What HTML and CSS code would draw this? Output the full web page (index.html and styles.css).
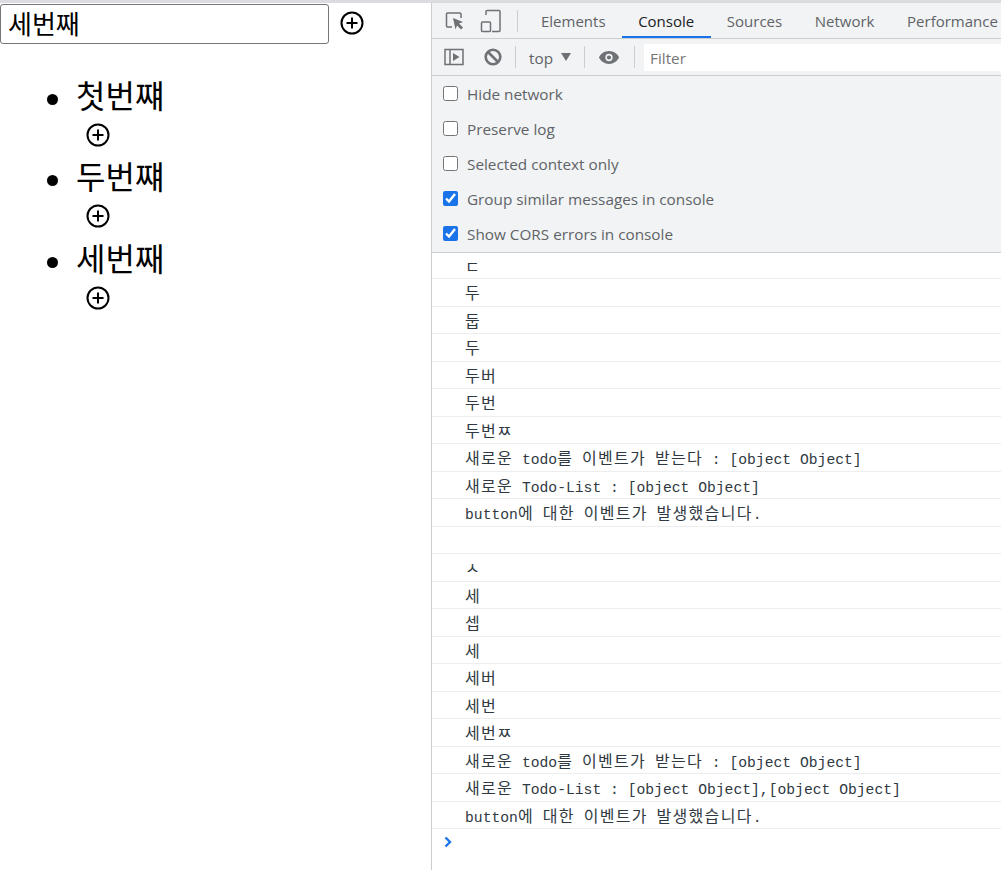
FILE: index.html
```html
<!DOCTYPE html>
<html lang="ko">
<head>
  <meta charset="UTF-8" />
  <title>Todo List</title>
  <link rel="stylesheet" href="styles.css">
</head>
<body>
  <div class="app">
    <div class="todo-form">
      <input class="todo-input" type="text" value="세번째" />
      <svg class="add-icon" viewBox="0 0 24 24"><circle cx="12" cy="12" r="10.500"/><path d="M12 6.500v11M6.500 12h11"/></svg>
    </div>
    <ul class="todo-list">
      <li>
        <div class="todo-text">첫번쨰</div>
        <svg class="add-icon" viewBox="0 0 24 24"><circle cx="12" cy="12" r="10.500"/><path d="M12 6.500v11M6.500 12h11"/></svg>
      </li>
      <li>
        <div class="todo-text">두번쨰</div>
        <svg class="add-icon" viewBox="0 0 24 24"><circle cx="12" cy="12" r="10.500"/><path d="M12 6.500v11M6.500 12h11"/></svg>
      </li>
      <li>
        <div class="todo-text">세번째</div>
        <svg class="add-icon" viewBox="0 0 24 24"><circle cx="12" cy="12" r="10.500"/><path d="M12 6.500v11M6.500 12h11"/></svg>
      </li>
    </ul>
  </div>

  <div class="devtools">
    <div class="tabbar">
      <svg class="tool-icon inspect" viewBox="0 0 22 22"><path class="thin" d="M8 17H3.500a1 1 0 0 1-1-1V4a1 1 0 0 1 1-1h12.500a1 1 0 0 1 1 1v4"/><path class="solid" d="M9 8l10 4-4 1.500 4 4-2 2-4-4-1.500 4z"/></svg>
      <svg class="tool-icon device" viewBox="0 0 22 24"><path class="thin" d="M6 6V2.500a1 1 0 0 1 1-1h12a1 1 0 0 1 1 1v19a1 1 0 0 1-1 1h-7"/><rect class="thin" x="1.500" y="13" width="9" height="9.500" rx="1"/></svg>
      <span class="divider"></span>
      <a class="tab">Elements</a>
      <a class="tab active">Console</a>
      <a class="tab">Sources</a>
      <a class="tab">Network</a>
      <a class="tab">Performance</a>
    </div>
    <div class="filterbar">
      <svg class="tool-icon sidebar" viewBox="0 0 20 18"><rect class="thin" x="1" y="1.500" width="18" height="15"/><path class="thin" d="M6 1.500v15"/><path class="solid" d="M9 5l6.500 4L9 13z"/></svg>
      <svg class="tool-icon clear" viewBox="0 0 18 18"><circle cx="9" cy="9" r="7.300"/><path d="M4 4l10 10"/></svg>
      <span class="divider"></span>
      <span class="context">top</span>
      <span class="caret"></span>
      <span class="divider"></span>
      <svg class="tool-icon eye" viewBox="0 0 24 16"><path class="solid" d="M12 1C7 1 3 4 1 8c2 4 6 7 11 7s9-3 11-7c-2-4-6-7-11-7z"/><circle class="pupil" cx="12" cy="8" r="4"/><circle class="solid" cx="12" cy="8" r="2.300"/></svg>
      <span class="divider"></span>
      <div class="filter-box">Filter</div>
    </div>
    <div class="settings">
      <label class="setting"><input type="checkbox" />Hide network</label>
      <label class="setting"><input type="checkbox" />Preserve log</label>
      <label class="setting"><input type="checkbox" />Selected context only</label>
      <label class="setting"><input type="checkbox" checked />Group similar messages in console</label>
      <label class="setting"><input type="checkbox" checked />Show CORS errors in console</label>
    </div>
    <div class="messages">
      <div class="msg"><span class="ko">ㄷ</span></div>
      <div class="msg"><span class="ko">두</span></div>
      <div class="msg"><span class="ko">둡</span></div>
      <div class="msg"><span class="ko">두</span></div>
      <div class="msg"><span class="ko">두버</span></div>
      <div class="msg"><span class="ko">두번</span></div>
      <div class="msg"><span class="ko">두번ㅉ</span></div>
      <div class="msg"><span class="ko">새로운</span> todo<span class="ko">를</span> <span class="ko">이벤트가</span> <span class="ko">받는다</span> : [object Object]</div>
      <div class="msg"><span class="ko">새로운</span> Todo-List : [object Object]</div>
      <div class="msg">button<span class="ko">에</span> <span class="ko">대한</span> <span class="ko">이벤트가</span> <span class="ko">발생했습니다</span>.</div>
      <div class="msg"></div>
      <div class="msg"><span class="ko">ㅅ</span></div>
      <div class="msg"><span class="ko">세</span></div>
      <div class="msg"><span class="ko">셉</span></div>
      <div class="msg"><span class="ko">세</span></div>
      <div class="msg"><span class="ko">세버</span></div>
      <div class="msg"><span class="ko">세번</span></div>
      <div class="msg"><span class="ko">세번ㅉ</span></div>
      <div class="msg"><span class="ko">새로운</span> todo<span class="ko">를</span> <span class="ko">이벤트가</span> <span class="ko">받는다</span> : [object Object]</div>
      <div class="msg"><span class="ko">새로운</span> Todo-List : [object Object],[object Object]</div>
      <div class="msg">button<span class="ko">에</span> <span class="ko">대한</span> <span class="ko">이벤트가</span> <span class="ko">발생했습니다</span>.</div>
      <div class="prompt">
        <svg class="prompt-icon" viewBox="0 0 8 12"><path d="M1.500 1.500L6 6l-4.500 4.500"/></svg>
      </div>
    </div>
  </div>
</body>
</html>
```

FILE: styles.css
```css
* {
  box-sizing: border-box;
}

html, body {
  height: 100%;
}

body {
  margin: 0;
  overflow: hidden;
  display: flex;
  background-color: #fff;
  border-top: 3px solid #dadce0;
  font-family: "Noto Sans CJK KR", sans-serif;
  color: #000;
}

/* left: the todo app */
.app {
  width: 431px;
  flex-shrink: 0;
}

.todo-form {
  display: flex;
  align-items: center;
  padding-top: 1px;
}

.todo-input {
  width: 329px;
  height: 40px;
  padding: 0 7px 3px;
  border: 1px solid #767676;
  border-radius: 3px;
  outline: none;
  font-family: "Noto Sans CJK KR", sans-serif;
  font-size: 26px;
  color: #000;
}

.add-icon {
  width: 24px;
  height: 24px;
  fill: none;
  stroke: #000;
  stroke-width: 2;
}

.todo-form .add-icon {
  margin: -2px 0 0 11px;
}

.todo-list {
  margin: 27px 0 0;
  padding: 0 0 0 76px;
  list-style: none;
  font-size: 32px;
}

.todo-list li {
  height: 81.300px;
}

.todo-text {
  height: 46px;
  line-height: 46px;
}

.todo-text::before {
  content: "";
  display: inline-block;
  width: 11px;
  height: 11px;
  margin: 0 18px 0 -29px;
  border-radius: 50%;
  background-color: #000;
  vertical-align: 3px;
}

.todo-list .add-icon {
  display: block;
  margin: 6px 0 0 10px;
}

/* right: devtools */
.devtools {
  flex: 1;
  min-width: 0;
  border-left: 1px solid #cbcdd1;
  font-family: "Open Sans", sans-serif;
  color: #5f6368;
  font-size: 15.300px;
}

.tabbar {
  height: 36px;
  display: flex;
  align-items: center;
  padding-left: 12px;
  background-color: #f1f3f4;
  border-bottom: 1px solid #cbcdd1;
  white-space: nowrap;
  overflow: hidden;
}

.tool-icon {
  flex-shrink: 0;
}

.thin {
  fill: none;
  stroke: #6e7175;
  stroke-width: 1.500;
}

.solid {
  fill: #6e7175;
}

.inspect {
  width: 22px;
  height: 22px;
}

.device {
  width: 22px;
  height: 24px;
  margin-left: 14px;
}

.divider {
  width: 1px;
  height: 22px;
  background-color: #cbcdd1;
  flex-shrink: 0;
}

.tabbar .divider {
  margin: 0 6.700px 0 15px;
}

.tab {
  height: 35px;
  line-height: 37px;
  padding: 0 16.300px;
  font-size: 15px;
}

.tab.active {
  color: #202124;
  border-bottom: 2px solid #1a73e8;
}

.filterbar {
  height: 37px;
  display: flex;
  align-items: center;
  padding-left: 12px;
  background-color: #f1f3f4;
  border-bottom: 1px solid #cbcdd1;
}

.sidebar {
  width: 20px;
  height: 18px;
}

.clear {
  width: 18px;
  height: 18px;
  margin-left: 20px;
  fill: none;
  stroke: #6e7175;
  stroke-width: 2.600;
}

.filterbar .divider {
  margin: 0 13px;
}

.context {
  padding-top: 2px;
}

.caret {
  width: 0;
  height: 0;
  margin-left: 8px;
  border-left: 5px solid transparent;
  border-right: 5px solid transparent;
  border-top: 8px solid #6e7175;
}

.eye {
  width: 22px;
  height: 15px;
  margin-right: 1px;
}

.pupil {
  fill: #f1f3f4;
}

.filter-box {
  flex: 1;
  height: 27px;
  line-height: 29px;
  margin-left: -4px;
  padding-left: 6px;
  background-color: #fff;
  color: #757575;
}

.settings {
  height: 177px;
  display: flex;
  flex-direction: column;
  background-color: #f1f3f4;
  border-bottom: 1px solid #cbcdd1;
}

.setting {
  height: 35px;
  display: flex;
  align-items: center;
  padding-left: 11px;
}

.setting input {
  width: 15px;
  height: 15px;
  margin: 0 9px 0 0;
  accent-color: #1a73e8;
}

.msg {
  height: 27.500px;
  line-height: 27px;
  padding-left: 33px;
  border-bottom: 1px solid #ededed;
  font-family: "Liberation Mono", "Noto Sans CJK KR", monospace;
  font-size: 14.700px;
  color: #303942;
  white-space: pre;
}

.msg:first-child {
  height: 26px;
  line-height: 26px;
}

.ko {
  font-family: "Noto Sans CJK KR", sans-serif;
  font-size: 16px;
  letter-spacing: 1.300px;
}

.prompt {
  padding: 7px 0 0 12px;
}

.prompt-icon {
  display: block;
  width: 8px;
  height: 12px;
  fill: none;
  stroke: #1a73e8;
  stroke-width: 2.400;
}
```
